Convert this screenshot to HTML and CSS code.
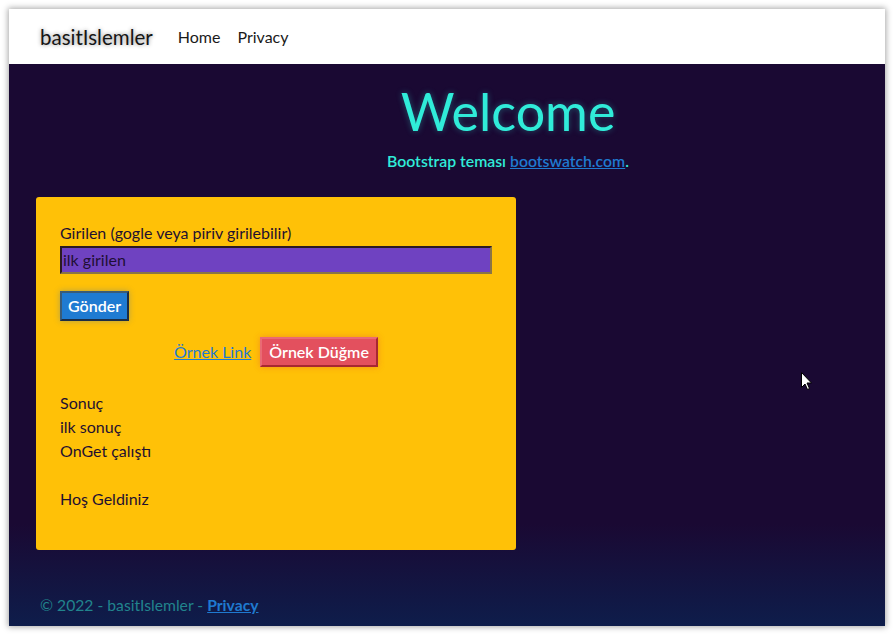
FILE: index.html
```html
<!DOCTYPE html>
<html lang="tr">
<head>
<meta charset="utf-8">
<title>basitIslemler</title>
<link rel="stylesheet" href="styles.css">
</head>
<body>
<div class="window">
  <nav class="navbar">
    <span class="brand">basitIslemler</span>
    <a class="nav-link" href="#">Home</a>
    <a class="nav-link" href="#">Privacy</a>
  </nav>
  <main class="main">
    <header class="hero">
      <h1 class="title">Welcome</h1>
      <p class="subtitle">Bootstrap teması <a href="#" class="sub-link">bootswatch.com</a>.</p>
    </header>
    <section class="card">
      <label class="label">Girilen (gogle veya piriv girilebilir)</label>
      <div class="input">ilk girilen</div>
      <div class="row-left"><button class="btn btn-primary">Gönder</button></div>
      <div class="row-center">
        <a href="#" class="card-link">Örnek Link</a>
        <button class="btn btn-danger">Örnek Düğme</button>
      </div>
      <div class="result">
        <p>Sonuç</p>
        <p>ilk sonuç</p>
        <p>OnGet çalıştı</p>
        <p class="blank">&nbsp;</p>
        <p>Hoş Geldiniz</p>
      </div>
    </section>
  </main>
  <footer class="footer"><span>© 2022 - basitIslemler - <a href="#" class="footer-link">Privacy</a></span></footer>
  <svg class="cursor" width="12" height="19" viewBox="0 0 12 19"><path d="M0.5 0.5 L0.5 15.5 L4 12 L6.5 17.5 L8.5 16.5 L6 11 L10.5 11 Z" fill="#fff" stroke="#000" stroke-width="1"/></svg>
</div>
</body>
</html>
```
FILE: styles.css
```css
html, body {
  margin: 0;
  padding: 0;
  background: #ffffff;
}
body {
  padding: 9px;
  font-family: Lato, "Open Sans", sans-serif;
}
.window {
  position: relative;
  width: 876px;
  height: 617px;
  display: flex;
  flex-direction: column;
  box-shadow: 0 0 6px 1px rgba(0, 0, 0, 0.35);
  background: linear-gradient(to bottom, #1a0933 0px, #1a0933 515px, #0e1d4b 617px);
  overflow: hidden;
}
.navbar {
  height: 55px;
  background: #ffffff;
  display: flex;
  align-items: center;
  padding-left: 31px;
  flex-shrink: 0;
}
.brand {
  font-size: 20.5px;
  color: #151515;
  text-shadow: 0 0 4px rgba(0, 0, 0, 0.45);
  margin-right: 25px;
}
.nav-link {
  font-size: 16px;
  color: #1a1a1a;
  text-decoration: none;
  margin-right: 17px;
}
.main {
  flex: 1;
  padding-left: 27px;
}
.hero {
  padding-left: 95px;
  text-align: center;
}
.title {
  margin: 0;
  padding-top: 16px;
  font-size: 52px;
  font-weight: 400;
  line-height: 62px;
  color: #30ecd9;
  text-shadow: 0 0 6px rgba(48, 236, 217, 0.35);
}
.subtitle {
  margin: 9px 0 0 0;
  font-size: 15.8px;
  line-height: 20px;
  font-weight: 600;
  color: #30ecd9;
}
.sub-link {
  color: #1f7ad0;
  text-decoration: underline;
}
.card {
  margin-top: 26px;
  width: 432px;
  height: 305px;
  background: #ffc107;
  border-radius: 3px;
  padding: 24px;
  color: #1f1030;
  font-size: 16px;
  line-height: 24px;
}
.label {
  display: block;
}
.input {
  margin-top: 1px;
  height: 24px;
  line-height: 24px;
  background: #6f42c1;
  border: 2px solid;
  border-color: #2b1a22 #8a7446 #8a7446 #2b1a22;
  padding-left: 1px;
  color: #1f0f35;
}
.row-left {
  margin-top: 17px;
  display: flex;
}
.btn {
  font-family: Lato, "Open Sans", sans-serif;
  font-size: 16px;
  color: #ffffff;
  font-weight: 600;
  border: 2px solid;
  height: 30px;
  padding: 0 6px;
  line-height: 26px;
  cursor: pointer;
}
.btn-primary {
  background: #1f7bd2;
  border-color: #3a5c78 #1d2d44 #1d2d44 #3a5c78;
  padding: 0 6px;
  box-shadow: 0 0 6px rgba(30, 100, 200, 0.35);
}
.btn-danger {
  background: #e3505e;
  border-color: #e96a74 #a72831 #a72831 #e96a74;
  padding: 0 7px;
  box-shadow: 0 0 6px rgba(220, 60, 60, 0.35);
}
.row-center {
  margin-top: 16px;
  display: flex;
  justify-content: center;
  align-items: center;
  gap: 9px;
}
.card-link {
  color: #1f7ad0;
  text-decoration: underline;
}
.result {
  margin-top: 24px;
}
.result p {
  margin: 0;
}
.footer {
  height: 44px;
  padding: 0 0 9px 31px;
  display: flex;
  align-items: flex-end;
  font-size: 15.7px;
  line-height: 24px;
  color: #21848d;
  flex-shrink: 0;
}
.footer-link {
  color: #1f7ad0;
  font-weight: 700;
  text-decoration: underline;
}
.cursor {
  position: absolute;
  left: 792px;
  top: 363px;
}
```
